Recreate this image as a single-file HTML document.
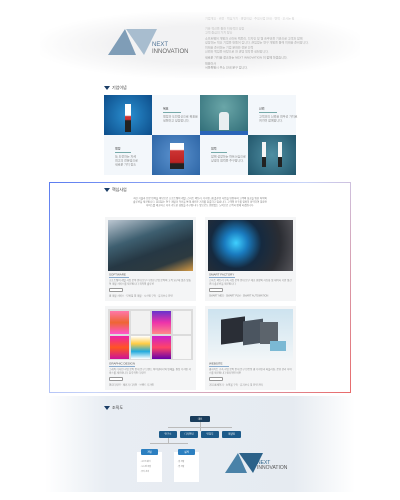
<!DOCTYPE html>
<html><head><meta charset="utf-8"><style>
*{margin:0;padding:0;box-sizing:border-box}
body{width:400px;height:500px;background:#fff;position:relative;overflow:hidden;font-family:"Liberation Sans","Noto Sans CJK KR",sans-serif;color:#444}
.a{position:absolute}
.t{font-size:6px;line-height:8px;color:#888;white-space:nowrap;overflow:hidden;transform:scale(.5);transform-origin:0 0}
.h{font-size:4px;color:#333}
.tri{width:0;height:0;border-left:3px solid transparent;border-right:3px solid transparent;border-top:4px solid #1a3d66}
.card{background:#f4f5f6}
.box{background:#1d5b8a;color:#fff;font-size:5px;text-align:center;line-height:12px;border-radius:2px;transform:scale(.5);transform-origin:0 0}
</style></head><body>
<div class="a" style="left:40px;top:12px;width:320px;height:66px;background:radial-gradient(ellipse at center,#f2f2f3 40%,#fff 75%)"></div>
<svg class="a" style="left:106px;top:28px" width="52" height="28" viewBox="0 0 52 28"><polygon points="2,27 19,1 30,27" fill="#7f9db7"/><polygon points="20,1 51,1 38,27" fill="#a8bdcf"/></svg>
<div class="a" style="left:152px;top:42px;font-size:6px;line-height:6px;color:#4f7396">NEXT</div>
<div class="a" style="left:152px;top:49px;font-size:6px;line-height:6px;color:#666">INNOVATION</div>
<div class="a t" style="left:205px;top:17px;color:#ccc">기업개요 · 비전 · 핵심가치 · 경영이념 · 주요사업 안내 · 연혁 · 오시는 길</div>
<div class="a t" style="left:205px;top:27px;color:#bbb">기술 혁신을 통한 지속적인 성장<br>고객 중심의 가치 창출</div>
<div class="a t" style="left:205px;top:37px;color:#aaa">소프트웨어 개발과 스마트 팩토리, 디자인 및 웹 솔루션을 기반으로 고객과 함께<br>성장하는 혁신 기업을 만들어 갑니다. 끊임없는 연구 개발을 통해 미래를 준비합니다.</div>
<div class="a t" style="left:205px;top:46px;color:#aaa">미래를 준비하는 기업 문화와 전문 인력<br>신뢰와 책임을 바탕으로 한 경영 철학을 실천합니다.</div>
<div class="a t" style="left:205px;top:56px;color:#999">새로운 가치를 창출하는 NEXT INNOVATION 이 함께 하겠습니다.</div>
<div class="a t" style="left:205px;top:62px;color:#999">대표이사<br>서울특별시 주소 안내 문구 입니다.</div>

<div class="a tri" style="left:104px;top:86px"></div>
<div class="a h" style="left:112px;top:85px">기업이념</div>
<div class="a" style="left:104px;top:95px;width:192px;height:80px;background:#f3f7fb"></div>
<div class="a" style="left:104px;top:95px;width:48px;height:40px;background:radial-gradient(circle,#2a8fd0,#0d4d8a)"></div>
<div class="a" style="left:200px;top:95px;width:48px;height:40px;background:radial-gradient(circle at 50% 30%,#6aa6a8,#2d6a75)"></div>
<div class="a" style="left:200px;top:131px;width:48px;height:4px;background:#2a64b8"></div>
<div class="a" style="left:152px;top:135px;width:48px;height:40px;background:radial-gradient(circle,#5b92cf,#2e66a6)"></div>
<div class="a" style="left:248px;top:135px;width:48px;height:40px;background:radial-gradient(circle,#4f8fa3,#22566b)"></div>
<div class="a" style="left:125px;top:104px;width:6px;height:28px;background:linear-gradient(#fff 40%,#c33 45%,#c33 55%,#222 60%)"></div>
<div class="a" style="left:219px;top:112px;width:10px;height:18px;background:#e8eef0;border-radius:3px 3px 0 0"></div>
<div class="a" style="left:170px;top:143px;width:14px;height:26px;background:linear-gradient(#fff 25%,#c33 30%,#b22 75%,#222 80%)"></div>
<div class="a" style="left:262px;top:142px;width:4px;height:25px;background:linear-gradient(#f5f5f5 60%,#222 60%)"></div>
<div class="a" style="left:278px;top:142px;width:4px;height:25px;background:linear-gradient(#f5f5f5 60%,#222 60%)"></div>
<div class="a t" style="left:163px;top:107px;color:#333">목표</div><div class="a" style="left:163px;top:112px;width:18px;height:.6px;background:#7aa"></div>
<div class="a t" style="left:163px;top:115px">열정과 도전정신으로 목표를<br>실현하고 성장합니다.</div>
<div class="a t" style="left:259px;top:107px;color:#333">신뢰</div><div class="a" style="left:259px;top:112px;width:18px;height:.6px;background:#7aa"></div>
<div class="a t" style="left:259px;top:115px">고객과의 신뢰를 최우선 가치로<br>여기며 함께합니다.</div>
<div class="a t" style="left:115px;top:147px;color:#333">열정</div><div class="a" style="left:115px;top:152px;width:16px;height:.6px;background:#7aa"></div>
<div class="a t" style="left:115px;top:155px">늘 도전하는 자세<br>최고의 전문성으로<br>새로운 가치 창출</div>
<div class="a t" style="left:211px;top:147px;color:#333">협력</div><div class="a" style="left:211px;top:152px;width:16px;height:.6px;background:#7aa"></div>
<div class="a t" style="left:211px;top:155px">함께 성장하는 파트너십으로<br>상생의 협력을 추구합니다.</div>

<div class="a" style="left:49px;top:182px;width:302px;height:211px;border:1px solid;border-image:linear-gradient(135deg,#5b7cf0,#c8d4f8 50%,#e86a6a) 1"></div>
<div class="a tri" style="left:104px;top:188px"></div>
<div class="a h" style="left:112px;top:187px">핵심사업</div>
<div class="a t" style="left:133px;top:197px;width:268px;text-align:center;white-space:normal;line-height:7px;font-size:5px;color:#777">최신 기술과 전문 인력을 바탕으로 소프트웨어 개발, 스마트 팩토리, 디자인, 웹 솔루션 사업을 영위하며 고객의 성공을 위한 최적의 솔루션을 제공합니다. 끊임없는 연구 개발과 혁신을 통해 새로운 가치를 창출하고 있습니다. 고객의 요구를 정확히 파악하여 맞춤형 서비스를 제공하고 지속 가능한 성장을 추구합니다. 앞으로도 변함없는 노력으로 고객과 함께 하겠습니다.</div>

<div class="a card" style="left:105px;top:217px;width:91px;height:84px"></div>
<div class="a" style="left:108px;top:220px;width:85px;height:51px;background:linear-gradient(160deg,#bcc7d2 0%,#3e5f70 35%,#263844 60%,#2d3a40 80%,#d59a44 100%)"></div>
<div class="a card" style="left:205px;top:217px;width:91px;height:84px"></div>
<div class="a" style="left:208px;top:220px;width:85px;height:51px;background:radial-gradient(circle at 33% 45%,#3fd0ff 0,#1a7cc0 18%,#152a40 40%,#2b2d33 70%,#56555a)"></div>
<div class="a card" style="left:105px;top:306px;width:91px;height:84px"></div>
<div class="a" style="left:108px;top:309px;width:85px;height:51px;background:#dcdcdc"></div>
<div class="a" style="left:110px;top:311px;width:19px;height:23px;background:linear-gradient(#f7a,#e63,#f5c)"></div>
<div class="a" style="left:131px;top:311px;width:19px;height:23px;background:#f1f1f1"></div>
<div class="a" style="left:152px;top:311px;width:19px;height:23px;background:linear-gradient(#63c,#e3a,#f88)"></div>
<div class="a" style="left:173px;top:311px;width:18px;height:23px;background:#f4f4f4"></div>
<div class="a" style="left:110px;top:336px;width:19px;height:23px;background:linear-gradient(#e2a,#f52,#c19)"></div>
<div class="a" style="left:131px;top:336px;width:19px;height:23px;background:linear-gradient(#fff,#fc4,#2ad,#fff)"></div>
<div class="a" style="left:152px;top:336px;width:19px;height:23px;background:linear-gradient(#c2c,#f46,#60a)"></div>
<div class="a" style="left:173px;top:336px;width:18px;height:23px;background:#f6f6f6"></div>
<div class="a card" style="left:205px;top:306px;width:91px;height:84px"></div>
<div class="a" style="left:208px;top:309px;width:85px;height:51px;background:linear-gradient(#cde3ef,#f2f6f8)"></div>
<div class="a" style="left:221px;top:318px;width:24px;height:25px;background:#2a2e36;transform:skewY(-8deg)"></div>
<div class="a" style="left:243px;top:320px;width:20px;height:24px;background:#4b5560;transform:skewY(-8deg)"></div>
<div class="a" style="left:260px;top:322px;width:18px;height:22px;background:#5c646c"></div>
<div class="a" style="left:270px;top:341px;width:16px;height:10px;background:#7bb9d4"></div>

<div class="a t" style="left:109px;top:273px;color:#555">SOFTWARE</div><div class="a" style="left:109px;top:277px;width:20px;height:.6px;background:#8ac"></div>
<div class="a t" style="left:109px;top:279px;width:168px;font-size:5px;line-height:7px;white-space:normal;height:14px">소프트웨어 개발 사업 분야 안내 문구 다양한 산업 분야의 고객 요구에 맞춘 맞춤형 개발 서비스를 제공합니다 최적의 솔루션</div>
<div class="a" style="left:109px;top:288px;width:14px;height:4px;border:.5px solid #999;border-radius:1px;background:#fff"></div>
<div class="a t" style="left:109px;top:294px;font-size:5px">웹 개발 서비스 · 모바일 앱 개발 · 시스템 구축 · 유지보수 운영</div>

<div class="a t" style="left:209px;top:273px;color:#555">SMART FACTORY</div><div class="a" style="left:209px;top:277px;width:26px;height:.6px;background:#8ac"></div>
<div class="a t" style="left:209px;top:279px;width:168px;font-size:5px;line-height:7px;white-space:normal;height:14px">스마트 팩토리 구축 사업 분야 안내 문구 제조 현장의 자동화 및 데이터 기반 생산 관리 솔루션을 제공합니다</div>
<div class="a" style="left:209px;top:288px;width:14px;height:4px;border:.5px solid #999;border-radius:1px;background:#fff"></div>
<div class="a t" style="left:209px;top:294px;font-size:5px">SMART MES · SMART PLM · SMART AUTOMATION</div>

<div class="a t" style="left:109px;top:362px;color:#555">GRAPHIC DESIGN</div><div class="a" style="left:109px;top:366px;width:26px;height:.6px;background:#8ac"></div>
<div class="a t" style="left:109px;top:368px;width:168px;font-size:5px;line-height:7px;white-space:normal;height:14px">그래픽 디자인 사업 분야 안내 문구 브랜드 아이덴티티와 인쇄물, 편집 디자인 서비스를 제공합니다 감각적인 디자인</div>
<div class="a" style="left:109px;top:377px;width:14px;height:4px;border:.5px solid #999;border-radius:1px;background:#fff"></div>
<div class="a t" style="left:109px;top:383px;font-size:5px">편집디자인 · 패키지 디자인 · 브랜드 디자인</div>

<div class="a t" style="left:209px;top:362px;color:#555">WEBSITE</div><div class="a" style="left:209px;top:366px;width:20px;height:.6px;background:#8ac"></div>
<div class="a t" style="left:209px;top:368px;width:168px;font-size:5px;line-height:7px;white-space:normal;height:14px">웹사이트 구축 사업 분야 안내 문구 반응형 웹 디자인과 퍼블리싱, 운영 관리 서비스를 제공합니다 합리적인 비용</div>
<div class="a" style="left:209px;top:377px;width:14px;height:4px;border:.5px solid #999;border-radius:1px;background:#fff"></div>
<div class="a t" style="left:209px;top:383px;font-size:5px">기업 홈페이지 · 쇼핑몰 구축 · 유지보수 및 운영 관리</div>

<div class="a" style="left:45px;top:396px;width:310px;height:96px;background:linear-gradient(90deg,#fff,#e8edf3 20%,#e6ebf1 80%,#fff)"></div>
<div class="a tri" style="left:104px;top:406px"></div>
<div class="a h" style="left:112px;top:405px">조직도</div>
<div class="a" style="left:200px;top:422px;width:.6px;height:9px;background:#bbb"></div>
<div class="a" style="left:168px;top:427px;width:64px;height:.6px;background:#bbb"></div>
<div class="a" style="left:150px;top:443px;width:38px;height:.6px;background:#bbb"></div>
<div class="a" style="left:168px;top:438px;width:.6px;height:6px;background:#bbb"></div>
<div class="a box" style="left:190px;top:416px;width:40px;height:12px;background:#1a3d5c">대표</div>
<div class="a box" style="left:159px;top:431px;width:36px;height:14px">연구소</div>
<div class="a box" style="left:180px;top:431px;width:36px;height:14px">디자인팀</div>
<div class="a box" style="left:201px;top:431px;width:36px;height:14px">영업부</div>
<div class="a box" style="left:222px;top:431px;width:38px;height:14px">개발팀</div>
<div class="a" style="left:137px;top:452px;width:25px;height:30px;background:#fff"></div>
<div class="a" style="left:174px;top:452px;width:25px;height:30px;background:#fff"></div>
<div class="a box" style="left:141px;top:449px;width:34px;height:12px;background:#2c7fc0">개발</div>
<div class="a box" style="left:178px;top:449px;width:34px;height:12px;background:#2c7fc0">설계</div>
<div class="a t" style="left:140px;top:459px;font-size:4px;line-height:10px">· 소프트웨어<br>· 시스템 개발<br>· 유지 관리</div>
<div class="a t" style="left:177px;top:459px;font-size:4px;line-height:10px">· 웹 개발<br>· 앱 개발</div>
<svg class="a" style="left:224px;top:452px" width="40" height="22" viewBox="0 0 40 22"><polygon points="1,21 14,1 23,21" fill="#4a82a8"/><polygon points="15,1 39,1 29,21" fill="#2c6289"/></svg>
<div class="a" style="left:257px;top:461px;font-size:5px;line-height:5px;color:#2c6289">NEXT</div>
<div class="a" style="left:257px;top:466px;font-size:5px;line-height:5px;color:#555">INNOVATION</div>
</body></html>
